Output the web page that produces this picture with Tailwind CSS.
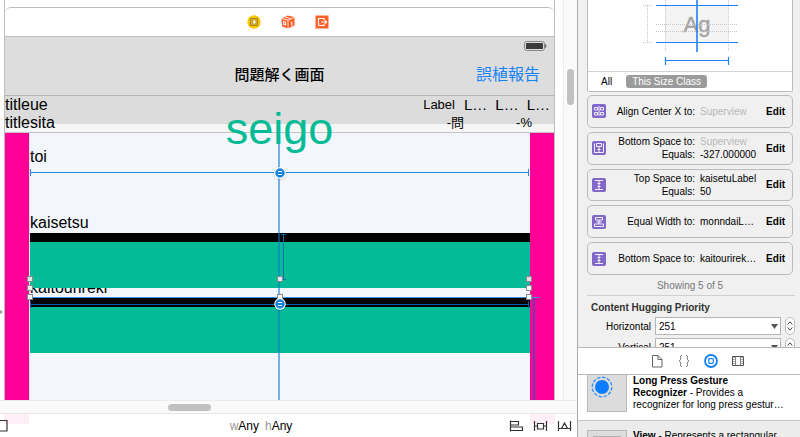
<!DOCTYPE html>
<html lang="ja">
<head>
  <meta charset="UTF-8" />
  <meta name="viewport" content="width=device-width, initial-scale=1.0"/>
  <title>Storyboard Editor</title>
  <script src="https://cdn.jsdelivr.net/npm/@tailwindcss/browser@4"></script>
</head>
<body class="flex h-screen overflow-hidden bg-white text-black font-['Liberation_Sans','Noto_Sans_CJK_JP',sans-serif]">

  <!-- Editor -->
  <main class="flex flex-1 min-w-0 flex-col">
    <div class="flex flex-1 min-h-0">

      <!-- Canvas -->
      <div class="relative flex flex-1 min-w-0 pl-1 pr-2">
        <svg class="absolute left-0 top-[308px] w-[3px] h-2" viewBox="0 0 3 8"><path d="M0 2l3 2-3 2z" fill="#999"/></svg>
        <div class="flex flex-1 min-w-0 flex-col border-x border-[#bdbdbd] pt-[7px]">

          <!-- Scene dock -->
          <div class="flex h-[30px] shrink-0 items-center justify-center gap-5 rounded-t-md border-y border-[#bdbdbd] pl-4">
            <svg class="w-[14px] h-[14px]" viewBox="0 0 14 14">
              <circle cx="7" cy="7" r="6.7" fill="#fbc400"/>
              <rect x="3.5" y="3.5" width="7" height="7" fill="#e3b21c" stroke="#a08a28"/>
              <path d="M6 5h1.500a1.500 2 0 0 1 0 4H6z" fill="#fff" stroke="#8f7a20" stroke-width=".5"/>
            </svg>
            <svg class="w-[14px] h-[14px]" viewBox="0 0 14 14">
              <path d="M.5 3.500L6.500.5l7 1.500v8.500l-6.500 3-6-2z" fill="#ff5f2b"/>
              <path d="M.5 3.500l6.500 1.700 6.500-3M7 5.200v8.300M3.500 2l6.500 1.700" fill="none" stroke="#fff" stroke-width=".8"/>
              <path d="M2.600 6.500l2 .5v3l-2-.5zM9.800 7.500l1-.6v4" fill="none" stroke="#fff"/>
            </svg>
            <svg class="w-[14px] h-[14px]" viewBox="0 0 14 14">
              <path d="M.5.500h13v13H.500z" fill="#ff5f2b"/>
              <path d="M9 5V3.500H3.500v7H9V9M6 7h5.500M9.800 5.200L11.600 7 9.800 8.800" fill="none" stroke="#fff" stroke-width="1.100"/>
            </svg>
          </div>

          <!-- Navigation bar -->
          <header class="flex h-[59px] shrink-0 flex-col border-b border-[#b4b4b4] bg-[#dddddd]">
            <div class="flex h-[18px] items-center justify-end pr-[7px]">
              <svg class="w-6 h-[10px]" viewBox="0 0 24 10">
                <rect x="1.500" y=".5" width="20" height="9" rx="2" fill="none" stroke="#888"/>
                <rect x="3" y="2" width="17" height="6" rx=".5" fill="#3c3c3c"/>
                <path d="M22 3v4q1.500-.5 1.500-2t-1.500-2z" fill="#666"/>
              </svg>
            </div>
            <div class="grid flex-1 grid-cols-[1fr_auto_1fr] items-center px-[14px]">
              <h1 class="col-start-2 text-[15px] leading-5 font-medium">問題解く画面</h1>
              <button class="justify-self-end text-base leading-5 text-[#1582f5]">誤植報告</button>
            </div>
          </header>

          <!-- Title rows -->
          <div class="relative flex h-[37px] shrink-0 justify-between border-b border-[#c4c4c4] bg-linear-to-b from-[#dcdcdc] from-[28px] to-[#f6f6f6] to-[28px]">
            <div class="text-base leading-[18px]">
              <p>titleue</p>
              <p>titlesita</p>
            </div>
            <div class="flex flex-col text-[13px] leading-[18px]">
              <div class="flex items-center gap-[9px] pr-1">
                <span>Label</span>
                <div class="flex gap-2 text-[15px] leading-[18px]"><span>L…</span><span>L…</span><span>L…</span></div>
              </div>
              <div class="flex justify-end gap-[52px] pr-[22px]"><span>-問</span><span>-%</span></div>
            </div>
            <p class="absolute inset-x-0 top-[8px] z-10 text-center text-[45px] leading-[50px] text-[#04bb96]">seigo</p>
          </div>

          <!-- Scene view -->
          <div class="relative flex flex-1 min-h-0 bg-[#f3f6fc] text-base">
            <div class="w-6 shrink-0 bg-[#ff0096]"></div>
            <div class="flex flex-1 min-w-0 flex-col border-l border-[#e3e3ee]">
              <div class="flex h-[100px] shrink-0 flex-col justify-between pt-[15px]">
                <p class="leading-[18px]">toi</p>
                <p class="leading-5">kaisetsu</p>
              </div>
              <div class="h-[9px] shrink-0 bg-black"></div>
              <div class="h-[46px] shrink-0 bg-[#04bb98]"></div>
              <div class="flex h-[10px] shrink-0 items-end overflow-hidden"><p class="leading-5">kaitourireki</p></div>
              <div class="h-[9px] shrink-0 bg-black"></div>
              <div class="h-[46px] shrink-0 bg-[#04bb98]"></div>
            </div>
            <div class="w-6 shrink-0 bg-[#ff0096]"></div>

            <!-- Constraint guides -->
            <div class="absolute inset-y-0 left-1/2 -ml-[2px] w-[2px] bg-[#0a78c8]/55"></div>
            <div class="absolute inset-x-[25px] top-[36px] flex h-[7px] items-center border-x border-[#2089d6]"><div class="h-px flex-1 bg-[#2089d6]"></div></div>
            <div class="absolute left-1/2 top-[101px] ml-px flex h-[46px] w-[5px] justify-center border-y border-[#0a6fa8]"><div class="w-px bg-[#0a6fa8]"></div></div>
            <div class="absolute left-6 right-[14px] top-[164px] h-px bg-[#3a8fe0]"></div>
            <div class="absolute inset-x-[25px] top-[168px] flex h-[7px] items-center border-x border-[#0a5ca8]"><div class="h-px flex-1 bg-[#0a5ca8]"></div></div>
            <div class="absolute bottom-0 right-[19px] top-[165px] w-[2px] bg-[#6a3cac]"></div>

            <!-- Selection handles -->
            <div class="absolute inset-x-[22px] top-[143px] flex justify-between">
              <i class="size-[6px] border border-[#8b8b8b] bg-[#d5eeea]"></i>
              <i class="size-[6px] border border-[#8b8b8b] bg-[#d5eeea]"></i>
              <i class="size-[6px] border border-[#8b8b8b] bg-[#e6dfe8]"></i>
            </div>
            <div class="absolute inset-x-[22px] top-[152px] flex justify-between">
              <i class="size-[6px] border border-[#8b8b8b] bg-[#f5f5f5]"></i>
              <i class="size-[6px] border border-[#8b8b8b] bg-[#f5f5f5]"></i>
            </div>
            <div class="absolute inset-x-[22px] top-[161px] flex justify-between">
              <i class="size-[6px] border border-[#8b8b8b] bg-[#f5f5f5]"></i>
              <i class="size-[6px] border border-[#8b8b8b] bg-[#f5f5f5]"></i>
              <i class="size-[6px] border border-[#8b8b8b] bg-[#f5f5f5]"></i>
            </div>

            <!-- Equal badges -->
            <div class="absolute inset-x-0 top-[34px] flex justify-center">
              <svg class="size-3 rounded-full shadow" viewBox="0 0 12 12">
                <circle cx="6" cy="6" r="5.300" fill="#1683d8" stroke="#fff" stroke-width="1.200"/><path d="M4 4.500h4M4 7.500h4" stroke="#fff"/>
              </svg>
            </div>
            <div class="absolute inset-x-0 top-[165px] flex justify-center">
              <svg class="size-3 rounded-full shadow" viewBox="0 0 12 12">
                <circle cx="6" cy="6" r="5.300" fill="#1683d8" stroke="#fff" stroke-width="1.200"/><path d="M4 4.500h4M4 7.500h4" stroke="#fff"/>
              </svg>
            </div>
          </div>
        </div>
      </div>

      <!-- Vertical scrollbar -->
      <div class="flex w-[14px] shrink-0 justify-center border-l border-[#ececec] bg-[#fafafa] pt-[69px]">
        <div class="h-9 w-[7px] rounded-full bg-[#c1c1c1]"></div>
      </div>
    </div>

    <!-- Horizontal scrollbar -->
    <div class="flex h-[13px] shrink-0 items-center border-t border-[#ececec] bg-[#fafafa] pl-[168px]">
      <div class="h-[7px] w-[43px] rounded-full bg-[#c1c1c1]"></div>
    </div>

    <!-- Size class bar -->
    <footer class="relative grid h-6 shrink-0 grid-cols-[1fr_auto_1fr] items-center border-t border-[#e6e6e6] bg-white pr-[5px] text-xs">
      <div class="absolute left-1 top-0 h-[10px] w-[25px] bg-[#fff0f7]"></div>
      <div class="absolute right-[22px] top-0 h-[10px] w-[25px] bg-[#fff0f7]"></div>
      <button class="relative justify-self-start" aria-label="Document outline">
        <svg class="h-3 w-2" viewBox="0 0 8 12"><path d="M0 .500h7v10.500H0" fill="none" stroke="#333" stroke-width="1.200"/></svg>
      </button>
      <button class="flex gap-[6px] pr-[50px]"><span><span class="text-[#999]">w</span>Any</span><span><span class="text-[#999]">h</span>Any</span></button>
      <div class="relative flex gap-[9px] justify-self-end">
        <button aria-label="Align">
          <svg class="h-3 w-[15px]" viewBox="0 0 15 12" fill="none" stroke="#333"><path d="M1.500.500v11M1.500 1.500h8v3.500h-8M1.500 7h12v3.500h-12" stroke-width="1.200"/></svg>
        </button>
        <button aria-label="Pin">
          <svg class="h-3 w-[15px]" viewBox="0 0 15 12" fill="none" stroke="#333"><path d="M1.500 1v10M13.500 1v10M1.500 6H4M11 6h2.500M4.500 3.500h6v5.500h-6z" stroke-width="1.200"/></svg>
        </button>
        <button aria-label="Resolve">
          <svg class="h-3 w-[15px]" viewBox="0 0 15 12" fill="none" stroke="#333"><path d="M1.500 1v10M13.500 1v10M1.500 8.500H4M11 8.500h2.500M4.500 8.500l3-5.500 3 5.500z" stroke-width="1.200"/></svg>
        </button>
      </div>
    </footer>
  </main>

  <!-- Inspector -->
  <aside class="flex w-[223px] shrink-0 flex-col border-l border-[#a9a9a9] bg-[#f0f0f0] text-[10px] leading-[13px]">
    <div class="flex flex-1 min-h-0 flex-col overflow-hidden pl-[9px] pr-[7px]">

      <div class="shrink-0 rounded-b-xs border border-t-0 border-[#bcbcbc] bg-white">
        <svg class="mx-auto block h-[71px] w-[204px]" viewBox="0 0 204 71" fill="none">
          <rect x="77" y="6" width="63" height="36" fill="#f4f4f4"/>
          <text x="109" y="32" text-anchor="middle" font-size="22" fill="#a3a3a3" stroke="#a3a3a3" stroke-width=".4">Ag</text>
          <path d="M77.500 0v52M140.500 0v52M68 24.500h82M68 31.500h82M59.500 6v36M55 5.500h9M55 42.500h9" stroke="#c6c6c6" stroke-dasharray="1 1"/>
          <path d="M68 5.500h82M68 42.500h82M78 60.500h62" stroke="#1f80f8" stroke-width="1.200"/>
          <path d="M109 0v52" stroke="#1f80f8" stroke-width="1.600"/>
          <path d="M77.500 57v8M140.500 57v8" stroke="#1f80f8" stroke-width="1.200"/>
        </svg>
        <div class="flex h-5 items-center gap-[14px] border-t border-[#d4d4d4] pl-[13px]">
          <button>All</button>
          <button class="rounded-[3px] bg-[#9b9b9b] px-[6px] text-white">This Size Class</button>
        </div>
      </div>

      <!-- Constraints -->
      <ul class="mt-[3px] grid h-[180px] shrink-0 grid-rows-5 gap-1">
        <li class="grid grid-cols-[14px_84px_1fr_auto] items-center gap-x-[5px] rounded-[5px] border border-[#bcbcbc] pl-1 pr-[7px]">
          <svg class="size-[14px]" viewBox="0 0 14 14" fill="none" stroke="#fff"><rect width="14" height="14" rx="2" fill="#8166cc" stroke="none"/><path d="M7 2v10M2.500 3.500H5.500v2.500H2.500zM8.500 3.500h3v2.500h-3zM2.500 8.500h3v2.500h-3zM8.500 8.500h3v2.500h-3z" stroke-width=".9"/></svg>
          <span class="text-right whitespace-nowrap">Align Center X to:</span>
          <span class="whitespace-nowrap text-[#b8b8b8]">Superview</span>
          <button class="font-bold">Edit</button>
        </li>
        <li class="grid grid-cols-[14px_84px_1fr_auto] items-center gap-x-[5px] rounded-[5px] border border-[#bcbcbc] pl-1 pr-[7px]">
          <svg class="size-[14px]" viewBox="0 0 14 14" fill="none" stroke="#fff"><rect width="14" height="14" rx="2" fill="#8166cc" stroke="none"/><path d="M2.500 2.500v9h9v-9M4.500 2.500h5v3h-5zM7 6v5M5.500 8.500h3" stroke-width=".9"/></svg>
          <span class="text-right whitespace-nowrap">Bottom Space to:<br>Equals:</span>
          <span class="whitespace-nowrap"><span class="text-[#b8b8b8]">Superview</span><br>-327.000000</span>
          <button class="font-bold">Edit</button>
        </li>
        <li class="grid grid-cols-[14px_84px_1fr_auto] items-center gap-x-[5px] rounded-[5px] border border-[#bcbcbc] pl-1 pr-[7px]">
          <svg class="size-[14px]" viewBox="0 0 14 14" fill="none" stroke="#fff"><rect width="14" height="14" rx="2" fill="#8166cc" stroke="none"/><path d="M3 2.500h8M3 11.500h8M7 3v8M5.500 5.500h3M5.500 8.500h3" stroke-width=".9"/></svg>
          <span class="text-right whitespace-nowrap">Top Space to:<br>Equals:</span>
          <span class="whitespace-nowrap">kaisetuLabel<br>50</span>
          <button class="font-bold">Edit</button>
        </li>
        <li class="grid grid-cols-[14px_84px_1fr_auto] items-center gap-x-[5px] rounded-[5px] border border-[#bcbcbc] pl-1 pr-[7px]">
          <svg class="size-[14px]" viewBox="0 0 14 14" fill="none" stroke="#fff"><rect width="14" height="14" rx="2" fill="#8166cc" stroke="none"/><path d="M3.500 2.500h7v2.500h-7zM2.500 9h9v2.500h-9zM4.500 7h5M7 5v4" stroke-width=".9"/></svg>
          <span class="text-right whitespace-nowrap">Equal Width to:</span>
          <span class="whitespace-nowrap">monndaiL…</span>
          <button class="font-bold">Edit</button>
        </li>
        <li class="grid grid-cols-[14px_84px_1fr_auto] items-center gap-x-[5px] rounded-[5px] border border-[#bcbcbc] pl-1 pr-[7px]">
          <svg class="size-[14px]" viewBox="0 0 14 14" fill="none" stroke="#fff"><rect width="14" height="14" rx="2" fill="#8166cc" stroke="none"/><path d="M3 2.500h8M3 11.500h8M7 3v8M5.500 5.500h3M5.500 8.500h3" stroke-width=".9"/></svg>
          <span class="text-right whitespace-nowrap">Bottom Space to:</span>
          <span class="whitespace-nowrap">kaitourirek…</span>
          <button class="font-bold">Edit</button>
        </li>
      </ul>
      <p class="mt-1 shrink-0 pb-[3px] text-center text-[#777]">Showing 5 of 5</p>

      <!-- Hugging priority -->
      <section class="-mr-[2px] shrink-0 border-t border-[#cfcfcf] pt-[5px]">
        <h2 class="pl-1 font-bold text-[#333]">Content Hugging Priority</h2>
        <div class="mt-[3px] flex flex-col gap-[3px]">
          <div class="flex h-[18px] items-center gap-1">
            <label for="hug-h" class="w-16 text-right">Horizontal</label>
            <div class="relative flex-1">
              <select id="hug-h" class="block h-[18px] w-full appearance-none border border-[#b5b5b5] bg-white pl-[3px]"><option>251</option></select>
              <svg class="pointer-events-none absolute right-[3px] top-[7px] h-[5px] w-[7px]" viewBox="0 0 7 5"><path d="M0 0h7L3.500 5z" fill="#555"/></svg>
            </div>
            <div class="flex h-[18px] w-[10px] flex-col items-center justify-evenly rounded-full border border-[#bbb] bg-white">
              <button aria-label="Increase"><svg class="block h-1 w-[6px]" viewBox="0 0 6 4"><path d="M.7 3.500L3 .8l2.300 2.700" fill="none" stroke="#444"/></svg></button>
              <button aria-label="Decrease"><svg class="block h-1 w-[6px]" viewBox="0 0 6 4"><path d="M.7.500L3 3.200 5.300.500" fill="none" stroke="#444"/></svg></button>
            </div>
          </div>
          <div class="flex h-[18px] items-center gap-1">
            <label for="hug-v" class="w-16 text-right">Vertical</label>
            <div class="relative flex-1">
              <select id="hug-v" class="block h-[18px] w-full appearance-none border border-[#b5b5b5] bg-white pl-[3px]"><option>251</option></select>
              <svg class="pointer-events-none absolute right-[3px] top-[7px] h-[5px] w-[7px]" viewBox="0 0 7 5"><path d="M0 0h7L3.500 5z" fill="#555"/></svg>
            </div>
            <div class="flex h-[18px] w-[10px] flex-col items-center justify-evenly rounded-full border border-[#bbb] bg-white">
              <button aria-label="Increase"><svg class="block h-1 w-[6px]" viewBox="0 0 6 4"><path d="M.7 3.500L3 .8l2.300 2.700" fill="none" stroke="#444"/></svg></button>
              <button aria-label="Decrease"><svg class="block h-1 w-[6px]" viewBox="0 0 6 4"><path d="M.7.500L3 3.200 5.300.500" fill="none" stroke="#444"/></svg></button>
            </div>
          </div>
        </div>
      </section>
    </div>

    <!-- Library tabs -->
    <nav class="flex h-7 shrink-0 items-center justify-center gap-[13px] border-y border-[#b9b9b9] bg-white pl-4">
      <button aria-label="File templates"><svg class="block size-[14px]" viewBox="0 0 14 14" fill="none" stroke="#666"><path d="M2.500 1.500h5.500l4 4v7.500h-9.500zM8 1.500v4h4"/></svg></button>
      <button aria-label="Code snippets"><svg class="block size-[14px]" viewBox="0 0 14 14" fill="none" stroke="#666"><path d="M5 1.500C2.500 1.500 4 4 3.500 5.500 3.300 6.500 2 7 2 7s1.300.5 1.500 1.500C4 10 2.500 12.500 5 12.500M9 1.500c2.500 0 1 2.500 1.500 4C10.700 6.500 12 7 12 7s-1.300.5-1.500 1.500c-.5 1.500 1 4-1.500 4"/></svg></button>
      <button aria-label="Objects"><svg class="block size-[14px]" viewBox="0 0 14 14" fill="none" stroke="#1280fa"><circle cx="7" cy="7" r="6" stroke-width="1.800"/><rect x="4.700" y="4.700" width="4.600" height="4.600" rx=".8" stroke-width="1.200"/></svg></button>
      <button aria-label="Media"><svg class="block size-[14px]" viewBox="0 0 14 14" fill="none" stroke="#555"><path d="M1.500 2.500h11v9h-11z"/><path d="M3 3v8M11 3v8" stroke-dasharray="1 1"/><path d="M4.500 3v8M9.500 3v8" stroke-width=".7"/></svg></button>
    </nav>

    <!-- Object library -->
    <ul class="h-[62px] shrink-0 overflow-hidden bg-white leading-3">
      <li class="flex h-[46px] gap-[6px] border-b border-[#c6c6c6] pl-[9px] pr-4">
        <div class="flex h-[37px] w-10 shrink-0 justify-start border border-t-0 border-[#b9b9b9] bg-[#dcdcdc] pl-[3px] pt-[1px]">
          <svg class="size-[22px]" viewBox="0 0 22 22"><circle cx="11" cy="11" r="7" fill="#0a7cff"/><circle cx="11" cy="11" r="9.800" fill="none" stroke="#2e8fff" stroke-width="1.300" stroke-dasharray="3.500 1.600"/></svg>
        </div>
        <p><b>Long Press Gesture Recognizer</b> - Provides a recognizer for long press gestur…</p>
      </li>
      <li class="flex h-[46px] gap-[6px] bg-[#ececec] pl-[9px] pr-4 pt-[9px]">
        <div class="w-10 shrink-0 border border-[#b9b9b9] bg-[#dcdcdc] px-[5px] pt-[5px]"><div class="h-6 border border-[#b0b0b0] bg-[#cfcfcf]"></div></div>
        <p class="whitespace-nowrap"><b>View</b> - Represents a rectangular</p>
      </li>
    </ul>
  </aside>

</body>
</html>
